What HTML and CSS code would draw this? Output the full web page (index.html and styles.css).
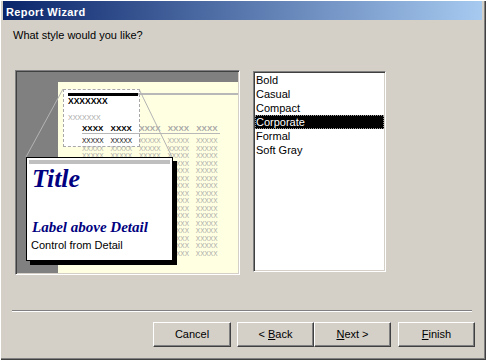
FILE: index.html
```html
<!DOCTYPE html>
<html>
<head>
<meta charset="utf-8">
<title>Report Wizard</title>
<link rel="stylesheet" href="styles.css">
</head>
<body>
<div class="window">
  <div class="titlebar"><span class="title">Report Wizard</span></div>
  <div class="prompt">What style would you like?</div>
  <div class="main">
    <div class="preview">
      <div class="page">
        <div class="zoombox"></div>
        <div class="rule-head"><span class="rule-black"></span><span class="rule-grey"></span></div>
        <div class="row r1">XXXXXXX</div>
        <div class="row r2">XXXXXXX</div>
        <div class="row r3"><span class="ink">XXXX XXXX</span> XXXX XXXX XXXX</div>
        <div class="rule-thin"></div>
        <div class="row small r5"><span class="ink">XXXXX XXXXX</span> XXXXX XXXXX XXXXX</div>
        <div class="row small">XXXXX XXXXX XXXXX XXXXX XXXXX</div>
        <div class="row small">XXXXX XXXXX XXXXX XXXXX XXXXX</div>
        <div class="row small tail">XXX XXXXX</div>
        <div class="row small tail">XXX XXXXX</div>
        <div class="row small tail">XXX XXXXX</div>
        <div class="row small tail">XXX XXXXX</div>
        <div class="row small tail">XXX XXXXX</div>
        <div class="row small tail">XXX XXXXX</div>
        <div class="row small tail">XXX XXXXX</div>
        <div class="row small tail">XXX XXXXX</div>
        <div class="row small tail">XXX XXXXX</div>
        <div class="row small tail">XXX XXXXX</div>
        <div class="row small tail">XXX XXXXX</div>
        <div class="row small tail">XXX XXXXX</div>
        <div class="row small tail">XXX XXXXX</div>
      </div>
      <svg class="lines" width="223" height="203" viewBox="0 0 223 203">
        <line x1="47" y1="18" x2="10" y2="86" stroke="#b4b4b4" stroke-width="1"/>
        <line x1="123" y1="18" x2="156" y2="86" stroke="#b4b4b4" stroke-width="1"/>
      </svg>
      <div class="callout">
        <div class="callout-bar"></div>
        <div class="callout-title">Title</div>
        <div class="callout-label">Label above Detail</div>
        <div class="callout-ctrl">Control from Detail</div>
      </div>
    </div>
    <ul class="listbox">
      <li class="item">Bold</li>
      <li class="item">Casual</li>
      <li class="item">Compact</li>
      <li class="item selected">Corporate</li>
      <li class="item">Formal</li>
      <li class="item">Soft Gray</li>
    </ul>
  </div>
  <div class="separator"></div>
  <div class="buttons">
    <button class="btn btn-cancel">Cancel</button>
    <button class="btn btn-back">&lt; <u>B</u>ack</button>
    <button class="btn btn-next"><u>N</u>ext &gt;</button>
    <button class="btn btn-finish"><u>F</u>inish</button>
  </div>
</div>
</body>
</html>
```

FILE: styles.css
```css
html, body {
  margin: 0;
  padding: 0;
}

body {
  background: #d4d0c8;
  font-family: "Liberation Sans", Arial, sans-serif;
  font-size: 11px;
  color: #000;
}

.window {
  width: 486px;
  height: 360px;
  box-sizing: border-box;
  padding: 1px 4px 2px 3px;
  background: #d4d0c8;
  box-shadow: inset 1px 1px 0 #ffffff, inset -1px -1px 0 #404040, inset -2px -2px 0 #808080;
  display: flex;
  flex-direction: column;
}

.titlebar {
  height: 19px;
  box-sizing: border-box;
  padding: 4px 0 0 3px;
  background: linear-gradient(to right, #0a246a, #a6caf0);
  flex: none;
}

.title {
  display: block;
  color: #fff;
  font-weight: bold;
  font-size: 11px;
  line-height: 14px;
  letter-spacing: 0.4px;
}

.prompt {
  margin-top: 8px;
  padding-left: 10px;
  line-height: 14px;
  font-size: 11px;
}

.main {
  display: flex;
  align-items: flex-start;
  margin-top: 28px;
}

/* report preview illustration */
.preview {
  position: relative;
  margin-left: 12px;
  width: 225px;
  height: 205px;
  box-sizing: border-box;
  border: 1px solid;
  border-color: #808080 #ffffff #ffffff #808080;
  box-shadow: inset 1px 1px 0 #404040, inset -1px -1px 0 #d4d0c8;
  background: #808080;
  padding: 11px 0 0 42px;
  flex: none;
}

.page {
  position: relative;
  width: 180px;
  height: 191px;
  background: #ffffe1;
  overflow: hidden;
}

.zoombox {
  position: absolute;
  left: 5px;
  top: 7px;
  width: 77px;
  height: 58px;
  box-sizing: border-box;
  background: #fff;
  border: 1px dashed #a8a8a8;
  z-index: 0;
}

.rule-head {
  position: relative;
  z-index: 1;
  display: flex;
  align-items: flex-start;
  margin: 11px 0 0 10px;
  height: 3px;
}

.rule-black {
  width: 70px;
  height: 3px;
  background: #000;
}

.rule-grey {
  flex: 1;
  height: 2px;
  background: #b8b8b8;
}

.row {
  position: relative;
  z-index: 1;
  white-space: nowrap;
  color: #a8a8a8;
  font-family: "Liberation Sans", Arial, sans-serif;
}

.r1 {
  height: 10px;
  line-height: 10px;
  margin-left: 10px;
  font-size: 8.5px;
  font-weight: bold;
  color: #000;
}

.r2 {
  margin-top: 7px;
  height: 10px;
  line-height: 10px;
  margin-left: 10px;
  font-size: 7px;
}

.r3 {
  margin-top: 2px;
  height: 8px;
  line-height: 8px;
  margin-left: 24px;
  font-size: 8px;
  font-weight: bold;
  word-spacing: 5px;
}

.rule-thin {
  position: relative;
  z-index: 1;
  margin-left: 24px;
  width: 138px;
  height: 1px;
  background: #b8b8b8;
}

.small {
  height: 7.5px;
  line-height: 7.5px;
  margin-left: 24px;
  font-size: 6.5px;
  word-spacing: 5px;
}

.small.tail {
  margin-left: 118px;
}

.r5 {
  margin-top: 3px;
}

.ink {
  color: #000;
}

.lines {
  position: absolute;
  left: 0;
  top: 0;
  z-index: 2;
}

.callout {
  position: absolute;
  left: 10px;
  top: 86px;
  width: 147px;
  height: 104px;
  box-sizing: border-box;
  background: #fff;
  border: 1px solid #000;
  box-shadow: 4px 4px 0 #000;
  padding: 2px 2px 0 2px;
  z-index: 3;
}

.callout-bar {
  height: 4px;
  background: #bfbfbf;
}

.callout-title {
  font-family: "Liberation Serif", "Times New Roman", serif;
  font-style: italic;
  font-weight: bold;
  font-size: 26px;
  line-height: 30px;
  color: #000080;
  padding-left: 3px;
}

.callout-label {
  font-family: "Liberation Serif", "Times New Roman", serif;
  font-style: italic;
  font-weight: bold;
  font-size: 15px;
  line-height: 18px;
  color: #000080;
  margin-top: 24px;
  padding-left: 3px;
}

.callout-ctrl {
  font-size: 11px;
  line-height: 14px;
  margin-top: 2px;
  padding-left: 2px;
}

/* style list */
.listbox {
  list-style: none;
  margin: 1px 0 0 13px;
  padding: 1px;
  width: 133px;
  height: 201px;
  box-sizing: border-box;
  background: #fff;
  border: 1px solid;
  border-color: #808080 #ffffff #ffffff #808080;
  box-shadow: inset 1px 1px 0 #404040, inset -1px -1px 0 #d4d0c8;
  flex: none;
}

.item {
  height: 14px;
  line-height: 14px;
  padding-left: 1px;
  font-size: 11px;
  white-space: nowrap;
}

.selected {
  background: #000;
  color: #fff;
  outline: 1px dotted #9a9a9a;
  outline-offset: -1px;
}

.separator {
  margin: 35px 10px 0 9px;
  height: 0;
  border-top: 1px solid #808080;
  border-bottom: 1px solid #ffffff;
}

.buttons {
  display: flex;
  justify-content: flex-end;
  margin-top: 10px;
  padding-right: 7px;
}

.btn {
  display: block;
  width: 77px;
  height: 25px;
  box-sizing: border-box;
  margin: 0;
  padding: 0;
  border: 1px solid;
  border-color: #ffffff #404040 #404040 #ffffff;
  box-shadow: inset -1px -1px 0 #808080, inset 1px 1px 0 #d4d0c8;
  background: #d4d0c8;
  font-family: "Liberation Sans", Arial, sans-serif;
  font-size: 11px;
  line-height: 23px;
  text-align: center;
  white-space: pre;
  color: #000;
}

.btn-cancel {
  width: 78px;
  margin-right: 6px;
}

.btn-next {
  margin-right: 7px;
}
```
